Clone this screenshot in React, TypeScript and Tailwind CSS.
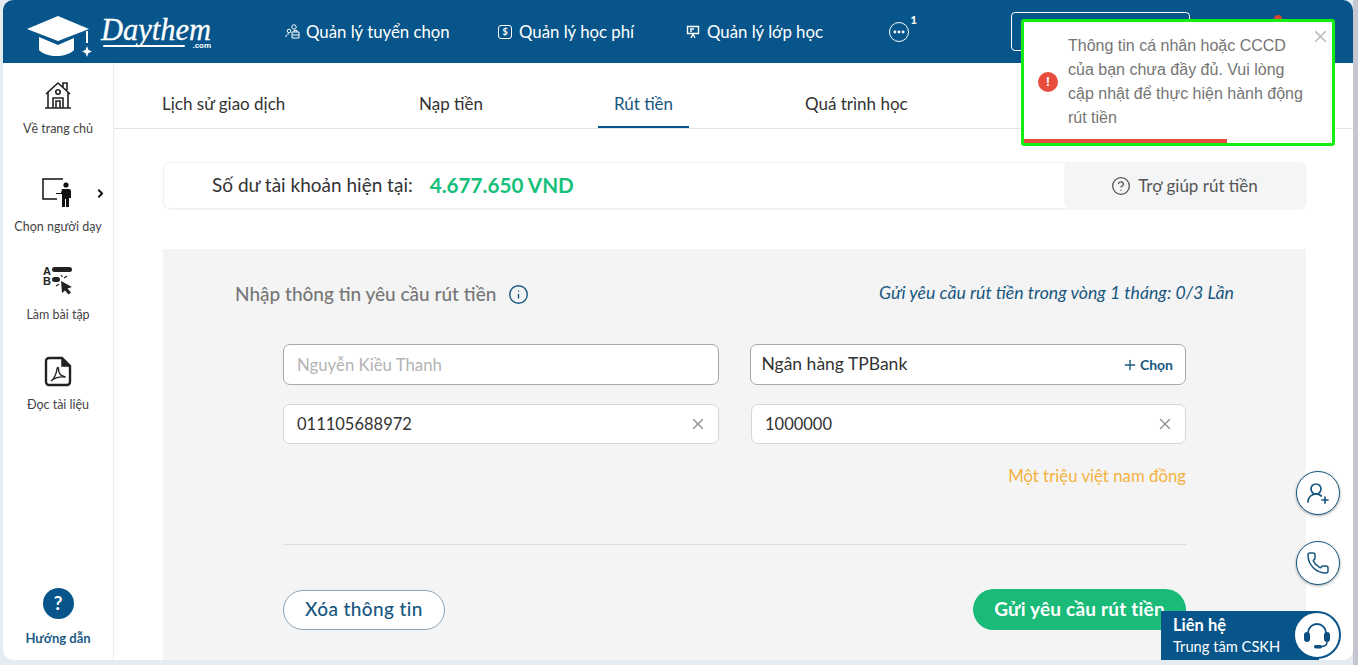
import React from "react";
import { ChevronRight, CircleHelp, Ellipsis, Info, Phone, Plus, UserRoundPlus, X } from "lucide-react";

const sideItems = [
    { label: "Về trang chủ", icon: <HomeIcon />, h: "h-[98px]" },
    { label: "Chọn người dạy", icon: <TeacherIcon />, h: "h-[88px]" },
    { label: "Làm bài tập", icon: <QuizIcon />, h: "h-[90px]" },
    { label: "Đọc tài liệu", icon: <PdfIcon />, h: "h-[90px]" },
];

function HomeIcon() {
    return (
        <svg width="28" height="28" viewBox="0 0 28 28" fill="none" stroke="#222" strokeWidth="1.6">
            <path d="M1 27h26M4 27V11L14 2l10 9v16M2 13 14 2l12 11M19 6V2h4v7" />
            <circle cx="14" cy="11" r="2.2" />
            <path d="M9 27V17h10v10M12 27v-7h4v7" />
        </svg>
    );
}

function TeacherIcon() {
    return (
        <svg width="32" height="30" viewBox="0 0 32 30" fill="none">
            <path d="M21 1H1v20h14" stroke="#111" strokeWidth="1.5" />
            <circle cx="24" cy="7" r="2.6" fill="#111" />
            <path d="M14 15h5l1-4h7a2 2 0 0 1 2 2v7h-2v9h-3v-8h-1v8h-3V16h-6z" fill="#111" />
        </svg>
    );
}

function QuizIcon() {
    return (
        <svg width="30" height="30" viewBox="0 0 30 30" fill="#222">
            <text x="0" y="9" fontSize="11" fontWeight="700" fontFamily="Liberation Sans, sans-serif">A</text>
            <rect x="9" y="1" width="20" height="5" rx="2.5" />
            <text x="0" y="19" fontSize="11" fontWeight="700" fontFamily="Liberation Sans, sans-serif">B</text>
            <rect x="9" y="11" width="8" height="5" rx="2.5" />
            <path d="M18 15 29 21l-4.5 1.500 3.500 4-2.500 2-3.500-4L19 27z" />
            <path d="M18 9l1.500 2M21 12l3-2M13 20l3-2" stroke="#222" strokeWidth="1.2" />
        </svg>
    );
}

function PdfIcon() {
    return (
        <svg width="28" height="31" viewBox="0 0 28 31" fill="none" stroke="#222">
            <path d="M2 5a3 3 0 0 1 3-3h13l8 8v16a3 3 0 0 1-3 3H5a3 3 0 0 1-3-3z" strokeWidth="2.4" />
            <path d="M18 2v8h8" fill="#222" strokeWidth="1.5" />
            <path d="M7 25c3-2 5-6 6-12 .3-2 1.500-2 1.500 0 0 4 2 7 7 8-5-.5-10 0-14.500 4z" strokeWidth="1.4" />
        </svg>
    );
}

function HeadsetIcon() {
    return (
        <svg width="28" height="30" viewBox="0 0 28 30" fill="#0f4f80">
            <path d="M5 13a9 9 0 0 1 18 0" fill="none" stroke="#0f4f80" strokeWidth="1.8" />
            <rect x="1" y="12" width="6" height="10" rx="3" />
            <rect x="21" y="12" width="6" height="10" rx="3" />
            <path d="M24 22c0 3-2 4.500-6 4.500" fill="none" stroke="#0f4f80" strokeWidth="1.5" />
            <rect x="11" y="25" width="8" height="3.5" rx="1.7" />
        </svg>
    );
}

function UsersMini() {
    return (
        <svg width="15" height="15" viewBox="0 0 15 15" fill="none" stroke="white" strokeWidth="1">
            <circle cx="9" cy="3" r="2.2" />
            <circle cx="4" cy="7" r="1.8" />
            <path d="M1 13c0-2 1-3 3-3M7 8h7v6H7zM9 8V6.500h3V8M7 11h7" />
        </svg>
    );
}

function BoardMini() {
    return (
        <svg width="14" height="14" viewBox="0 0 14 14" fill="none" stroke="white" strokeWidth="1.4">
            <path d="M1.500 1.500h11v7h-11z" />
            <path d="M4 4h4M4 6h2M5 13l2-4 2 4" />
        </svg>
    );
}

function Logo() {
    return (
        <div className="flex items-start w-[190px]">
            <svg width="68" height="42" viewBox="0 0 68 42" fill="white" className="mt-[10px] ml-[24px] shrink-0">
                <path d="M0 13 31 0l31 13-31 12z" />
                <path d="M12 21l19 8 16-7v12c-8 8-27 8-35 0z" />
                <path d="M59 15v12h2V15zM60 30l1.500 4 3.500 1.500-3.500 1.500-1.500 4-1.500-4-3.500-1.500 3.500-1.500z" />
            </svg>
            <div className="relative ml-[6px] mt-[11px] text-white font-['Liberation_Serif',serif] italic text-[30.5px] leading-[26px] [-webkit-text-stroke:0.3px_white]">
                Daythem
                <div className="absolute left-[2px] top-[28px] w-[82px] h-[2px] bg-white rounded-full" />
                <div className="absolute right-0 top-[24px] text-[8px] leading-[10px] not-italic font-['Liberation_Sans',sans-serif] font-bold [-webkit-text-stroke:0]">.com</div>
            </div>
        </div>
    );
}

function Field({ value, width }: { value: string; width: string }) {
    return (
        <div className={`${width} flex items-center justify-between bg-white rounded-[7px] border h-[40px] border-[#d6d6d6] pl-[13px] pr-[11px]`}>
            <span className="text-[16.5px] text-[#333]">{value}</span>
            <X size={18} strokeWidth={1.6} className="text-[#8a8a8a]" />
        </div>
    );
}

const App = () => {
    return (
        <div className="relative w-[1358px] h-[665px] overflow-hidden bg-[#e4ebf1] font-['Lato','Noto_Sans',sans-serif]">
            <div className="absolute right-0 top-0 w-[5px] h-[665px] bg-[#c6c6d0]" />
            <div className="relative ml-[3px] w-[1350px] h-[660px] bg-white rounded-[10px] overflow-hidden">
                <header className="h-[63px] bg-[#07558a] flex items-center text-white">
                    <Logo />
                    <nav className="flex items-center ml-[92px] text-[16.8px]">
                        <span className="flex items-center gap-[6px] w-[213px]">
                            <UsersMini />
                            Quản lý tuyển chọn
                        </span>
                        <span className="flex items-center gap-[7px] w-[188px]">
                            <span className="w-[14px] h-[14px] rounded-[3px] border-[1.5px] border-white text-[9px] leading-[11px] text-center font-bold">$</span>
                            Quản lý học phí
                        </span>
                        <span className="flex items-center gap-[7px] w-[203px]">
                            <BoardMini />
                            Quản lý lớp học
                        </span>
                        <span className="relative">
                            <span className="flex w-[20px] h-[20px] rounded-full border-[1.5px] border-white items-center justify-center">
                                <Ellipsis size={14} strokeWidth={3} />
                            </span>
                            <span className="absolute -right-[8px] -top-[10px] text-[11px] font-black">1</span>
                        </span>
                    </nav>
                    <div className="ml-[102px] w-[179px] h-[39px] rounded-[4px] border border-white" />
                    <div className="ml-[84px] -mt-[27px] w-[8px] h-[6px] rounded-t-full bg-[#d9472f]" />
                </header>

                <div className="flex h-[597px]">
                    <aside className="w-[111px] shrink-0 border-r border-[#ececec] flex flex-col justify-between">
                        <div>
                            {sideItems.map((item, i) => (
                                <div key={item.label} className={`relative flex flex-col items-center pt-[16px] ${item.h}`}>
                                    <div className="h-[32px] flex items-center">{item.icon}</div>
                                    <div className="mt-[10px] text-[12.5px] leading-[16px] text-[#444]">{item.label}</div>
                                    {i === 1 && <ChevronRight size={13} strokeWidth={3.5} className="absolute right-[6px] top-[26px] text-[#111]" />}
                                </div>
                            ))}
                        </div>
                        <div className="flex flex-col items-center pb-[14px]">
                            <div className="w-[31px] h-[31px] rounded-full bg-[#07558a] text-white text-[19px] font-bold flex items-center justify-center">?</div>
                            <div className="mt-[11px] text-[13px] leading-[16px] font-bold text-[#1d5b86]">Hướng dẫn</div>
                        </div>
                    </aside>

                    <main className="flex-1 min-w-0">
                        <div className="h-[66px] border-b border-[#e4e4e4] flex items-end pl-[48px] text-[17px] text-[#333]">
                            <span className="w-[257px] h-[50px] pt-[13px]">Lịch sử giao dịch</span>
                            <span className="w-[179px] h-[50px] pt-[13px]">Nạp tiền</span>
                            <span className="w-[91px] h-[50px] pt-[13px] text-center text-[#17577f] border-b-2 border-[#07558a]">Rút tiền</span>
                            <span className="ml-[116px] h-[50px] pt-[13px]">Quá trình học</span>
                        </div>

                        <div className="ml-[49px] mr-[47px]">
                            <div className="mt-[33px] h-[47px] flex items-center justify-between rounded-[7px] border border-[#f0f0f0] shadow-[0_1px_2px_rgba(0,0,0,0.04)]">
                                <div className="flex items-center pl-[48px]">
                                    <span className="text-[19px] text-[#333]">Số dư tài khoản hiện tại:</span>
                                    <span className="ml-[17px] text-[20.7px] font-bold text-[#17c07a]">4.677.650 VND</span>
                                </div>
                                <div className="w-[241px] h-[47px] rounded-[6px] bg-[#f4f5f6] flex items-center justify-center gap-[7px] text-[17px] text-[#555]">
                                    <CircleHelp size={20} strokeWidth={1.6} />
                                    Trợ giúp rút tiền
                                </div>
                            </div>

                            <div className="mt-[40px] h-[430px] bg-[#f4f4f5] px-[72px] pt-[31px]">
                                <div className="flex items-center justify-between h-[28px]">
                                    <div className="flex items-center gap-[12px] text-[19px] font-medium text-[#777]">
                                        Nhập thông tin yêu cầu rút tiền
                                        <Info size={21} strokeWidth={1.6} className="text-[#17577f]" />
                                    </div>
                                    <span className="italic text-[17.7px] -mt-[2px] text-[#17577f]">Gửi yêu cầu rút tiền trong vòng 1 tháng: 0/3 Lần</span>
                                </div>

                                <div className="mx-[48px] mt-[36px]">
                                    <div className="flex gap-[31px]">
                                        <div className="w-[436px] flex items-center bg-white rounded-[7px] border border-[#a9a9a9] h-[41px] pl-[13px]">
                                            <span className="text-[16.8px] text-[#b4b4b4]">Nguyễn Kiều Thanh</span>
                                        </div>
                                        <div className="w-[437px] flex items-center justify-between bg-white rounded-[7px] border border-[#a9a9a9] h-[41px] pl-[11px] pr-[12px]">
                                            <span className="text-[17.5px] text-[#333]">Ngân hàng TPBank</span>
                                            <span className="flex items-center gap-[2px] text-[14px] font-bold text-[#17577f]">
                                                <Plus size={16} strokeWidth={2} />
                                                Chọn
                                            </span>
                                        </div>
                                    </div>
                                    <div className="flex gap-[32px] mt-[19px]">
                                        <Field value="011105688972" width="w-[436px]" />
                                        <Field value="1000000" width="w-[435px]" />
                                    </div>
                                    <div className="mt-[20px] text-right text-[16.8px] leading-[24px] text-[#f5b13d]">Một triệu việt nam đồng</div>
                                    <div className="mt-[56px] border-t border-[#dcdcdc]" />
                                    <div className="mt-[44px] flex items-center justify-between">
                                        <button className="w-[162px] h-[40px] rounded-full bg-white border border-[#8aa2b4] text-[19px] tracking-[0.4px] font-medium text-[#17577f]">Xóa thông tin</button>
                                        <button className="w-[213px] h-[41px] rounded-full bg-[#1abb78] text-[19px] tracking-[0.2px] font-bold text-white">Gửi yêu cầu rút tiền</button>
                                    </div>
                                </div>
                            </div>
                        </div>
                    </main>
                </div>

                <div className="absolute right-[13px] top-[471px] flex flex-col gap-[26px]">
                    <div className="w-[44px] h-[44px] rounded-full bg-white border border-[#17577f] shadow-[0_1px_3px_rgba(0,0,0,0.35)] flex items-center justify-center text-[#17577f]">
                        <UserRoundPlus size={24} strokeWidth={1.7} />
                    </div>
                    <div className="w-[44px] h-[44px] rounded-full bg-white border border-[#17577f] shadow-[0_1px_3px_rgba(0,0,0,0.35)] flex items-center justify-center text-[#17577f]">
                        <Phone size={24} strokeWidth={1.5} />
                    </div>
                </div>

                <div className="absolute left-[1158px] top-[611px] w-[158px] h-[49px] bg-[#07558a] text-white pl-[12px] pt-[4px]">
                    <div className="text-[16.5px] leading-[21px] font-bold">Liên hệ</div>
                    <div className="text-[14.7px] leading-[21px]">Trung tâm CSKH</div>
                    <div className="absolute left-[132px] top-[0px] w-[48px] h-[48px] rounded-full bg-white border-[2px] border-[#07558a] flex items-center justify-center">
                        <HeadsetIcon />
                    </div>
                </div>
            </div>

            <div className="absolute left-[1021px] top-[19px] w-[314px] h-[127px] bg-white border-[3px] border-[#14ee14] rounded-[3px] font-['Liberation_Sans',sans-serif] overflow-hidden flex items-center">
                <div className="ml-[14px] w-[20px] h-[20px] rounded-full bg-[#e74c3c] text-white text-[13px] font-bold flex items-center justify-center shrink-0 -mt-[1px]">!</div>
                <div className="ml-[10px] text-[16px] leading-[24px] text-[#757575] -mt-[2px]">
                    Thông tin cá nhân hoặc CCCD
                    <br />
                    của bạn chưa đầy đủ. Vui lòng
                    <br />
                    cập nhật để thực hiện hành động
                    <br />
                    rút tiền
                </div>
                <X size={19} strokeWidth={2.2} className="absolute right-[2px] top-[5px] text-[#bdbdbd]" />
                <div className="absolute left-0 bottom-0 w-[203px] h-[4px] bg-[#e74c3c]" />
            </div>
        </div>
    );
};

export default App;
